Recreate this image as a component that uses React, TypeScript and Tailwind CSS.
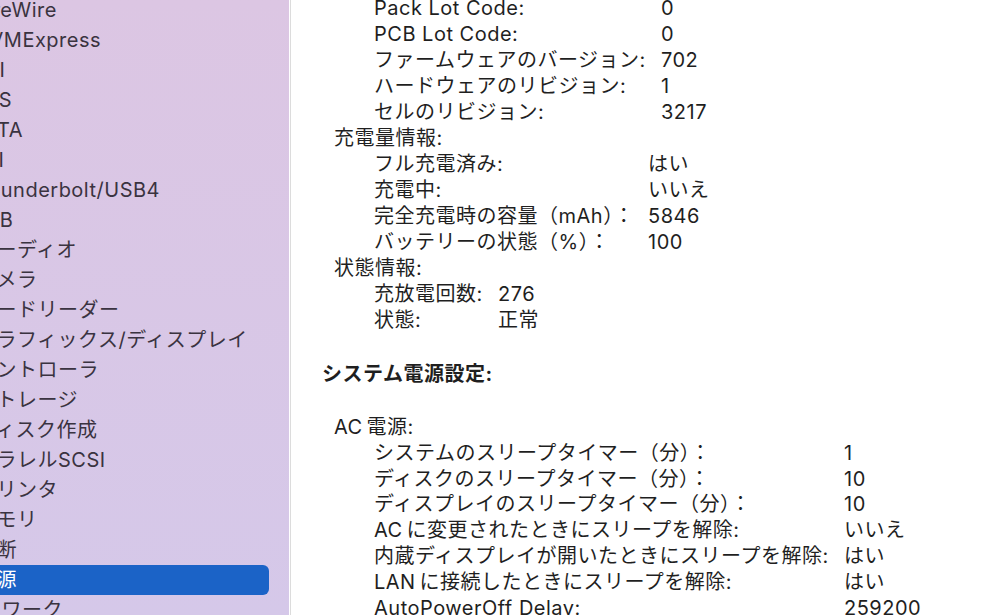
import React from 'react';

type Item = { label: string; offset?: string; selected?: boolean };

const sidebarItems: Item[] = [
    { label: 'FireWire', offset: 'ml-[-25px]' },
    { label: 'NVMExpress', offset: 'ml-[-26px]' },
    { label: 'PCI', offset: 'ml-[-29px]' },
    { label: 'SAS', offset: 'ml-[-29px]' },
    { label: 'SATA', offset: 'ml-[-29px]' },
    { label: 'SPI', offset: 'ml-[-28px]' },
    { label: 'Thunderbolt/USB4', offset: 'ml-[-25px]' },
    { label: 'USB', offset: 'ml-[-29px]' },
    { label: 'オーディオ' },
    { label: 'カメラ' },
    { label: 'カードリーダー' },
    { label: 'グラフィックス/ディスプレイ' },
    { label: 'コントローラ' },
    { label: 'ストレージ' },
    { label: 'ディスク作成' },
    { label: 'パラレルSCSI' },
    { label: 'プリンタ' },
    { label: 'メモリ' },
    { label: '診断' },
    { label: '電源', selected: true },
    { label: 'ネットワーク', offset: 'ml-[-60px]' },
];

type Row = [string, string];

function Rows({ rows, labelWidth }: { rows: Row[]; labelWidth: string }) {
    return (
        <div className="pl-[52px]">
            {rows.map(([label, value], index) => (
                <div key={index} className="flex whitespace-nowrap">
                    <div className={labelWidth}>{label}</div>
                    <div>{value}</div>
                </div>
            ))}
        </div>
    );
}

function Sidebar() {
    return (
        <aside className="w-[289px] shrink-0 overflow-hidden bg-gradient-to-b from-[#dcc6e3] to-[#d5c8e9] text-[20px] tracking-[0.5px] text-[#3a3340]">
            <div className="mt-[-5px]">
                {sidebarItems.map((item, index) => (
                    <div
                        key={index}
                        className={
                            item.selected
                                ? 'flex h-[30px] items-center mr-[20px] rounded-r-[6px] bg-[#1b63c7] text-white'
                                : 'flex h-[30px] items-center'
                        }
                    >
                        <span className={`whitespace-nowrap ${item.offset ?? 'ml-[-24px]'}`}>{item.label}</span>
                    </div>
                ))}
            </div>
        </aside>
    );
}

export default function App() {
    return (
        <div
            className="flex h-[615px] w-[993px] overflow-hidden bg-white"
            style={{ fontFamily: 'Inter, "Noto Sans CJK JP", sans-serif' }}
        >
            <Sidebar />
            <div className="w-px shrink-0 bg-white" />
            <div className="w-px shrink-0 bg-[#dcdcdc]" />
            <main className="flex-1 pl-[31px] text-[20px] leading-[26px] tracking-[0.5px] text-[#1f1f1f]">
                <div className="mt-[-5px]">
                    <Rows
                        labelWidth="w-[287px]"
                        rows={[
                            ['Pack Lot Code:', '0'],
                            ['PCB Lot Code:', '0'],
                            ['ファームウェアのバージョン:', '702'],
                            ['ハードウェアのリビジョン:', '1'],
                            ['セルのリビジョン:', '3217'],
                        ]}
                    />
                    <div className="pl-[12px]">充電量情報:</div>
                    <Rows
                        labelWidth="w-[274px]"
                        rows={[
                            ['フル充電済み:', 'はい'],
                            ['充電中:', 'いいえ'],
                            ['完全充電時の容量（mAh）：', '5846'],
                            ['バッテリーの状態（%）：', '100'],
                        ]}
                    />
                    <div className="pl-[12px]">状態情報:</div>
                    <Rows
                        labelWidth="w-[124px]"
                        rows={[
                            ['充放電回数:', '276'],
                            ['状態:', '正常'],
                        ]}
                    />
                </div>
                <div className="mt-[28px] font-bold">システム電源設定:</div>
                <div className="mt-[28px] leading-[25.8px]">
                    <div className="pl-[12px]">AC&#8198;電源:</div>
                    <Rows
                        labelWidth="w-[470px]"
                        rows={[
                            ['システムのスリープタイマー（分）：', '1'],
                            ['ディスクのスリープタイマー（分）：', '10'],
                            ['ディスプレイのスリープタイマー（分）：', '10'],
                            ['AC\u2006に変更されたときにスリープを解除:', 'いいえ'],
                            ['内蔵ディスプレイが開いたときにスリープを解除:', 'はい'],
                            ['LAN\u2006に接続したときにスリープを解除:', 'はい'],
                            ['AutoPowerOff Delay:', '259200'],
                        ]}
                    />
                </div>
            </main>
        </div>
    );
}
